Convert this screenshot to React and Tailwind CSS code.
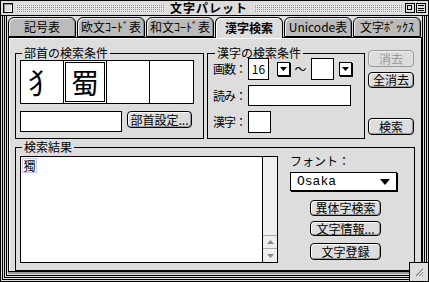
import React from "react";

const tabs = [
  { label: "記号表" },
  { label: "欧文ｺｰﾄﾞ表" },
  { label: "和文ｺｰﾄﾞ表" },
  { label: "漢字検索", active: true },
  { label: "Unicode表" },
  { label: "文字ﾎﾞｯｸｽ" },
];

function Btn({ children, className = "", disabled = false }) {
  return (
    <div
      className={
        "flex shrink-0 items-center justify-center whitespace-nowrap rounded-[4px] border bg-[#dddddd] text-[12px] leading-none " +
        (disabled
          ? "border-[#999999] text-[#999999] shadow-[inset_1px_1px_0_#eeeeee] "
          : "border-black text-black shadow-[inset_1px_1px_0_#ffffff,inset_-1px_-1px_0_#999999] ") +
        className
      }
    >
      {children}
    </div>
  );
}

function ArrowBox() {
  return (
    <div className="flex h-[14px] w-[13px] shrink-0 items-center justify-center border border-black bg-white shadow-[1px_1px_0_#000]">
      <svg width="7" height="4" viewBox="0 0 7 4">
        <path d="M0 0H7L3.5 4Z" fill="#000" />
      </svg>
    </div>
  );
}

export default function App() {
  return (
    <div className="relative flex h-[282px] w-[429px] flex-col overflow-hidden border border-black bg-[#dddddd] text-[12px] text-black [font-family:'Noto_Sans_CJK_JP','Noto_Sans_CJK_SC',sans-serif]">
      {/* Title bar */}
      <div className="flex h-[15px] shrink-0 items-center border-b border-black bg-[#dddddd] pl-[2px] pr-[2px]">
        <div className="h-[10px] w-[10px] shrink-0 border border-black bg-[#dddddd] shadow-[inset_1px_1px_0_#888,inset_-1px_-1px_0_#fff]" />
        <div className="ml-[3px] mr-[4px] h-[9px] flex-1 bg-[linear-gradient(90deg,#e6e6e6_50%,transparent_50%),linear-gradient(#e6e6e6_50%,#8a8a8a_50%)] bg-[length:2px_2px]" />
        <div className="shrink-0 whitespace-nowrap px-[2px] text-[12px] font-bold leading-none tracking-[1px]">文字パレット</div>
        <div className="ml-[4px] mr-[3px] h-[9px] flex-1 bg-[linear-gradient(90deg,#e6e6e6_50%,transparent_50%),linear-gradient(#e6e6e6_50%,#8a8a8a_50%)] bg-[length:2px_2px]" />
        <div className="relative h-[10px] w-[10px] shrink-0 border border-black bg-[#dddddd]">
          <div className="absolute left-[1px] top-[1px] h-[5px] w-[5px] border border-black" />
        </div>
        <div className="ml-[1px] flex h-[10px] w-[10px] shrink-0 flex-col justify-evenly border border-black bg-[#dddddd] px-[1px]">
          <div className="h-px bg-black" />
          <div className="h-px bg-black" />
          <div className="h-px bg-black" />
        </div>
      </div>

      {/* Frame lines */}
      <div className="flex flex-1 flex-col px-[1px] pb-[1px]">
        <div className="flex flex-1 flex-col border-x border-b border-black px-[1px] pb-[1px]">
          <div className="flex flex-1 flex-col border-x border-b border-black px-[1px] pb-[1px]">
            <div className="flex flex-1 flex-col border-x border-b border-black pb-[3px] pl-[1px] pt-[1px]">
              {/* Tabs */}
              <div className="flex h-[20px] shrink-0 gap-[1px]">
                {tabs.map((t) => (
                  <div
                    key={t.label}
                    className={
                      "flex w-[68px] shrink-0 items-center justify-center whitespace-nowrap rounded-t-[6px] border border-black text-[12px] leading-none " +
                      (t.active
                        ? "relative z-10 h-[21px] border-b-0 bg-[#dddddd] font-bold shadow-[inset_1px_1px_0_#ffffff]"
                        : "bg-[#bbbbbb] shadow-[inset_1px_1px_0_#eeeeee,inset_-1px_0_0_#888888]")
                    }
                  >
                    {t.label}
                  </div>
                ))}
              </div>

              {/* Pane */}
              <div className="flex w-[414px] flex-1 flex-col border border-black bg-[#dddddd] pl-[6px] pt-[8px] shadow-[inset_1px_1px_0_#ffffff,0_2px_0_#999999]">
                <div className="flex gap-[3px]">
                  {/* Radical group */}
                  <fieldset className="h-[93px] w-[189px] border border-black pl-[4px]">
                    <legend className="ml-[2px] px-[2px] text-[12px] leading-[14px]">部首の検索条件</legend>
                    <div className="flex h-[44px] w-[174px] border border-black bg-white">
                      <div className="flex w-[43px] items-center justify-center border-r border-black text-[28px] leading-none">犭</div>
                      <div className="flex w-[43px] items-center justify-center border-r border-black p-px">
                        <div className="flex h-full w-full items-center justify-center border border-black text-[28px] leading-none">蜀</div>
                      </div>
                      <div className="w-[43px] border-r border-black" />
                      <div className="flex-1" />
                    </div>
                    <div className="mt-[7px] flex items-start gap-[5px]">
                      <div className="h-[21px] w-[102px] border border-black bg-white" />
                      <Btn className="h-[17px] w-[65px]">部首設定...</Btn>
                    </div>
                  </fieldset>

                  {/* Kanji group */}
                  <fieldset className="h-[93px] w-[158px] border border-black pl-[5px]">
                    <legend className="ml-[2px] px-[2px] text-[12px] leading-[14px]">漢字の検索条件</legend>
                    <div className="-mt-[2px] flex flex-col">
                      <div className="flex h-[22px] items-center">
                        <span className="w-[35px] shrink-0 whitespace-nowrap tracking-[-1px]">画数：</span>
                        <div className="flex h-[22px] w-[21px] shrink-0 items-center justify-center border border-black bg-white">16</div>
                        <div className="ml-[8px]"><ArrowBox /></div>
                        <span className="w-[21px] shrink-0 text-center">～</span>
                        <div className="h-[22px] w-[23px] shrink-0 border border-black bg-white" />
                        <div className="ml-[5px]"><ArrowBox /></div>
                      </div>
                      <div className="mt-[5px] flex h-[21px] items-center">
                        <span className="w-[35px] shrink-0 whitespace-nowrap tracking-[-1px]">読み：</span>
                        <div className="h-[21px] w-[103px] shrink-0 border border-black bg-white" />
                      </div>
                      <div className="mt-[5px] flex h-[22px] items-center">
                        <span className="w-[35px] shrink-0 whitespace-nowrap tracking-[-1px]">漢字：</span>
                        <div className="h-[22px] w-[23px] shrink-0 border border-black bg-white" />
                      </div>
                    </div>
                  </fieldset>

                  {/* Buttons */}
                  <div className="flex w-[46px] flex-col pt-[4px]">
                    <Btn disabled className="h-[17px]">消去</Btn>
                    <Btn className="mt-[5px] h-[16px]">全消去</Btn>
                    <Btn className="mt-[30px] h-[17px]">検索</Btn>
                  </div>
                </div>

                {/* Results group */}
                <fieldset className="mt-[1px] h-[131px] w-[400px] border border-black pl-[4px]">
                  <legend className="ml-[2px] px-[2px] text-[12px] leading-[14px]">検索結果</legend>
                  <div className="flex">
                    <div className="mt-[2px] flex h-[107px] w-[258px] shrink-0 border border-black bg-white">
                      <div className="flex-1 p-px">
                        <div className="flex h-[15px] w-[15px] items-center justify-center border border-[#c8c8f0] text-[12px] leading-none">獨</div>
                      </div>
                      <div className="flex w-[15px] flex-col justify-end border-l border-black bg-[#eeeeee]">
                        <div className="flex h-[13px] items-center justify-center border-t border-[#aaaaaa]">
                          <svg width="7" height="4" viewBox="0 0 7 4"><path d="M3.5 0L7 4H0Z" fill="#888" /></svg>
                        </div>
                        <div className="flex h-[14px] items-center justify-center border-t border-[#aaaaaa]">
                          <svg width="7" height="4" viewBox="0 0 7 4"><path d="M0 0H7L3.5 4Z" fill="#888" /></svg>
                        </div>
                      </div>
                    </div>
                    <div className="flex flex-1 flex-col items-start pl-[12px]">
                      <div className="w-[107px] whitespace-nowrap text-[12px] leading-[14px]">フォント：</div>
                      <div className="mt-[4px] flex h-[19px] w-[107px] items-center justify-between border border-black bg-white pl-[6px] pr-[6px] text-[13px] shadow-[1px_1px_0_#000] [font-family:'Liberation_Mono',monospace]">
                        <span>Osaka</span>
                        <svg width="10" height="6" viewBox="0 0 10 6"><path d="M0 0H10L5 6Z" fill="#000" /></svg>
                      </div>
                      <Btn className="ml-[20px] mt-[9px] h-[16px] w-[71px]">異体字検索</Btn>
                      <Btn className="ml-[20px] mt-[5px] h-[15px] w-[71px]">文字情報...</Btn>
                      <Btn className="ml-[20px] mt-[7px] h-[17px] w-[71px]">文字登録</Btn>
                    </div>
                  </div>
                </fieldset>
              </div>
            </div>
          </div>
        </div>
      </div>

      {/* Grow box */}
      <div className="absolute bottom-0 right-0 flex h-[19px] w-[19px] items-center justify-center border-l border-t border-black bg-[#dddddd]">
        <svg width="11" height="11" viewBox="0 0 11 11">
          <path d="M2 9L9 2M5 9L9 5M8 9L9 8" stroke="#888" strokeWidth="1.2" />
          <path d="M3 10L10 3M6 10L10 6" stroke="#fff" strokeWidth="1" />
        </svg>
      </div>
    </div>
  );
}
